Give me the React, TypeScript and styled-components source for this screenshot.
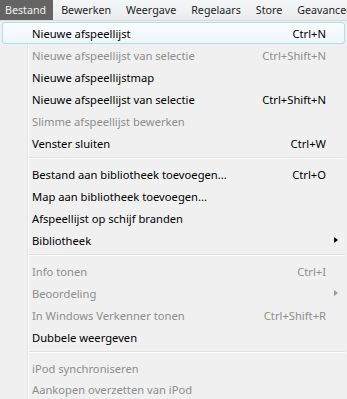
import styled, { createGlobalStyle } from 'styled-components';

const GlobalStyle = createGlobalStyle`
  html, body {
    margin: 0;
    padding: 0;
    background: #f0f0f0;
    overflow: hidden;
  }
  body {
    font-family: 'Noto Sans', 'Open Sans', sans-serif;
    font-size: 11.2px;
  }
`;

const MenuBar = styled.div`
  display: flex;
  height: 20px;
  background: linear-gradient(#f5f6f7, #e9ecee);
  border-bottom: 1px solid #dadbdc;
  white-space: nowrap;
  overflow: hidden;
  font-size: 10.7px;
`;

const BarItem = styled.div<{ $open?: boolean }>`
  display: flex;
  align-items: center;
  padding: 0 7px 0 5px;
  margin-right: 3px;
  color: ${({ $open }) => ($open ? '#f0f0f0' : '#1e1e1e')};
  background: ${({ $open }) => ($open ? '#646464' : 'transparent')};
`;

const Menu = styled.div`
  display: flex;
  flex-direction: column;
  padding: 1px 2px 0 2px;
  background:
    linear-gradient(
      to right,
      #f0f0f0 0,
      #f0f0f0 27px,
      #e2e3e3 27px,
      #e2e3e3 28px,
      #ffffff 28px,
      #ffffff 29px,
      #f0f0f0 29px
    );
  height: 378px;
`;

const Row = styled.div<{ $disabled?: boolean; $active?: boolean }>`
  display: grid;
  grid-template-columns: 1fr auto 18px;
  align-items: center;
  padding: 2px 0 0 29px;
  box-sizing: border-box;
  height: 22px;
  border: 1px solid ${({ $active }) => ($active ? '#aedcf0' : 'transparent')};
  border-radius: 3px;
  background: ${({ $active }) =>
    $active ? 'linear-gradient(#fbfdfe, #eef6fc)' : 'transparent'};
  color: ${({ $disabled }) => ($disabled ? '#8d8d8d' : '#000')};
  white-space: nowrap;
`;

const Shortcut = styled.span`
  text-align: right;
`;

const Arrow = styled.span<{ $disabled?: boolean }>`
  justify-self: center;
  margin: -1px 0 0 1px;
  width: 0;
  height: 0;
  border-top: 3.5px solid transparent;
  border-bottom: 3.5px solid transparent;
  border-left: 4px solid ${({ $disabled }) => ($disabled ? '#9a9a9a' : '#000')};
`;

const Separator = styled.div`
  height: 9px;
  margin-left: 27px;
  display: flex;
  flex-direction: column;
  justify-content: center;

  &::after {
    content: '';
    height: 1px;
    border-top: 1px solid #e0e0e0;
    background: #ffffff;
  }
`;

type Item =
  | { sep: true }
  | { label: string; key?: string; disabled?: boolean; sub?: boolean; active?: boolean };

const items: Item[] = [
  { label: 'Nieuwe afspeellijst', key: 'Ctrl+N', active: true },
  { label: 'Nieuwe afspeellijst van selectie', key: 'Ctrl+Shift+N', disabled: true },
  { label: 'Nieuwe afspeellijstmap' },
  { label: 'Nieuwe afspeellijst van selectie', key: 'Ctrl+Shift+N' },
  { label: 'Slimme afspeellijst bewerken', disabled: true },
  { label: 'Venster sluiten', key: 'Ctrl+W' },
  { sep: true },
  { label: 'Bestand aan bibliotheek toevoegen...', key: 'Ctrl+O' },
  { label: 'Map aan bibliotheek toevoegen...' },
  { label: 'Afspeellijst op schijf branden' },
  { label: 'Bibliotheek', sub: true },
  { sep: true },
  { label: 'Info tonen', key: 'Ctrl+I', disabled: true },
  { label: 'Beoordeling', sub: true, disabled: true },
  { label: 'In Windows Verkenner tonen', key: 'Ctrl+Shift+R', disabled: true },
  { label: 'Dubbele weergeven' },
  { sep: true },
  { label: 'iPod synchroniseren', disabled: true },
  { label: 'Aankopen overzetten van iPod', disabled: true },
];

const bar = ['Bestand', 'Bewerken', 'Weergave', 'Regelaars', 'Store', 'Geavanceerd', 'Help'];

export default function App() {
  return (
    <>
      <GlobalStyle />
      <MenuBar>
        {bar.map((b, i) => (
          <BarItem key={b} $open={i === 0}>
            {b}
          </BarItem>
        ))}
      </MenuBar>
      <Menu>
        {items.map((it, i) =>
          'sep' in it ? (
            <Separator key={i} />
          ) : (
            <Row key={i} $disabled={it.disabled} $active={it.active}>
              <span>{it.label}</span>
              <Shortcut>{it.key}</Shortcut>
              {it.sub ? <Arrow $disabled={it.disabled} /> : <span />}
            </Row>
          )
        )}
      </Menu>
    </>
  );
}
